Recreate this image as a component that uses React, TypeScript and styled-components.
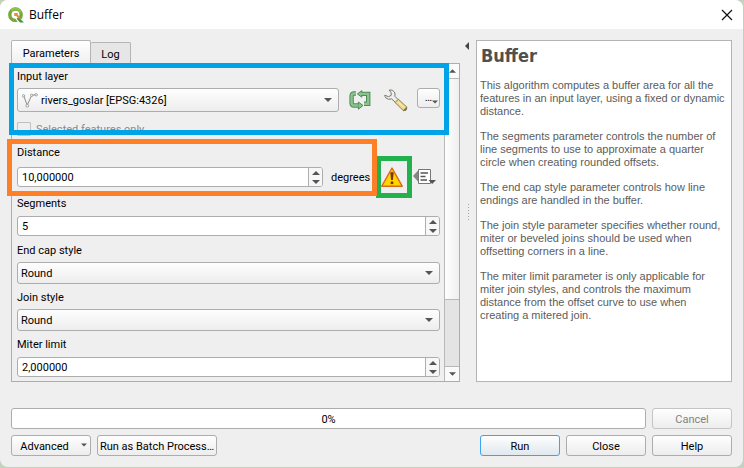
import React from "react";
import styled, { createGlobalStyle, css } from "styled-components";

const GlobalStyle = createGlobalStyle`
  * { box-sizing: border-box; }
  body {
    margin: 0;
    background: #c3d2bd;
    color: #000;
    font: 11px/14px Roboto, sans-serif;
  }
  button, input, select { font: inherit; color: inherit; margin: 0; }
`;

const buttonFace = css`
  border: 1px solid #adadad;
  border-radius: 3px;
  background: linear-gradient(#fefefe, #ededed);
`;

const Dialog = styled.main`
  display: flex;
  flex-direction: column;
  min-height: calc(100vh - 1px);
  margin: 0 1px 1px 0;
  border-radius: 8px;
  background: #efefef;
  overflow: hidden;
`;

const TitleBar = styled.header`
  display: flex;
  align-items: center;
  gap: 5px;
  height: 29px;
  padding: 0 8px;
  background: #fff;
`;

const Title = styled.h1`
  flex: 1;
  margin: 0;
  font: 12px/16px "Open Sans", sans-serif;
`;

const CloseIcon = styled.button`
  display: flex;
  padding: 2px;
  border: 0;
  background: none;
`;

const Content = styled.div`
  display: flex;
  flex: 1;
  flex-direction: column;
  padding: 11px;
`;

const Columns = styled.div`
  display: grid;
  flex: 1;
  grid-template-columns: minmax(0, 449fr) 16px minmax(0, 256fr);
`;

const LeftColumn = styled.section`
  display: flex;
  flex-direction: column;
`;

const Tabs = styled.div`
  display: flex;
  align-items: flex-end;
  height: 23px;
`;

const Tab = styled.button<{ $active?: boolean }>`
  width: ${(p) => (p.$active ? 80 : 40)}px;
  height: ${(p) => (p.$active ? 23 : 21)}px;
  padding: 3px 0 0;
  border: 1px solid #b4b4b4;
  border-width: ${(p) => (p.$active ? "1px" : "1px 1px 0 0")};
  border-bottom: 0;
  border-radius: 2px 2px 0 0;
  background: ${(p) => (p.$active ? "linear-gradient(#fff, #f0f0f0)" : "#e6e6e6")};
`;

const Pane = styled.div`
  display: flex;
  flex: 1;
  border: 1px solid #adadad;
`;

const Form = styled.form`
  display: flex;
  flex: 1;
  min-width: 0;
  flex-direction: column;
  gap: 5px;
  padding: 4px 4px 4px 5px;
`;

const Field = styled.div<{ $gap?: number; $after?: number }>`
  position: relative;
  display: flex;
  flex-direction: column;
  gap: ${(p) => p.$gap ?? 4}px;
  margin-bottom: ${(p) => p.$after ?? 0}px;
`;

const FieldLabel = styled.label`
  padding-top: 2px;
`;

const Row = styled.div`
  display: flex;
  align-items: center;
`;

const SelectBox = styled.div`
  position: relative;
  display: flex;
  flex: 1;
  min-width: 0;
  align-items: center;
`;

const Select = styled.select<{ $tall?: boolean }>`
  ${buttonFace}
  width: 100%;
  height: ${(p) => (p.$tall ? 24 : 22)}px;
  padding: 2px 20px 0 ${(p) => (p.$tall ? 23 : 3)}px;
  appearance: none;
`;

const SelectArrow = styled.span`
  position: absolute;
  right: 7px;
  display: flex;
  pointer-events: none;
`;

const LayerGlyph = styled.span`
  position: absolute;
  left: 5px;
  display: flex;
  pointer-events: none;
`;

const ToolButton = styled.button`
  display: flex;
  padding: 0;
  border: 0;
  background: none;
`;

const LayerTools = styled.div`
  display: flex;
  align-items: center;
  gap: 13px;
  margin: 0 9px 0 10px;
`;

const MoreButton = styled.button`
  ${buttonFace}
  display: flex;
  align-items: flex-end;
  align-self: flex-start;
  justify-content: flex-end;
  width: 23px;
  height: 20px;
  padding: 0 1px 3px;
  line-height: 12px;
`;

const CheckRow = styled.label`
  display: flex;
  align-items: center;
  gap: 5px;
  margin-top: 6px;
  color: #8a8a8a;
`;

const CheckText = styled.span`
  padding-top: 2px;
  line-height: 12px;
`;

const CheckBox = styled.input`
  width: 14px;
  height: 14px;
  margin: 0;
  border: 1px solid #c0c0c0;
  border-radius: 1px;
  background: #efefef;
  appearance: none;
`;

const SpinFrame = styled.div`
  display: flex;
  flex: 1;
  min-width: 0;
  height: 20px;
  border: 1px solid #adadad;
  border-radius: 3px;
  background: #fff;
  overflow: hidden;
`;

const SpinInput = styled.input`
  flex: 1;
  min-width: 0;
  padding: 2px 4px 0;
  border: 0;
  background: none;
`;

const SpinSteps = styled.div`
  display: flex;
  flex-direction: column;
  width: 14px;
  border-left: 1px solid #adadad;
  background: #f7f7f7;
`;

const Step = styled.button`
  display: flex;
  flex: 1;
  align-items: center;
  justify-content: center;
  padding: 0;
  border: 0;
  background: none;
`;

const DistanceTools = styled.div`
  display: flex;
  align-items: center;
  width: 117px;
  padding-left: 8px;
`;

const Unit = styled.span`
  width: 50px;
  padding-top: 2px;
`;

const Warning = styled.span`
  position: relative;
  display: flex;
  margin-right: 10px;
`;

const Highlight = styled.span<{ $color: string; $inset: string }>`
  position: absolute;
  z-index: 1;
  inset: ${(p) => p.$inset};
  border: 5px solid ${(p) => p.$color};
  pointer-events: none;
`;

const ScrollBar = styled.div`
  display: flex;
  flex-direction: column;
  width: 15px;
  border-left: 1px solid #b8b8b8;
  background: #e4e4e4;
`;

const ScrollButton = styled.button`
  display: flex;
  align-items: center;
  justify-content: center;
  height: 14px;
  padding: 0;
  border: 0;
  background: #fafafa;
`;

const ScrollThumb = styled.div`
  flex: 220;
  border: solid #b8b8b8;
  border-width: 1px 0;
  background: linear-gradient(90deg, #fefefe, #efefef);
`;

const ScrollRest = styled.div`
  flex: 66;
  border-bottom: 1px solid #b8b8b8;
`;

const Splitter = styled.div`
  display: flex;
  flex-direction: column;
  align-items: center;
  justify-content: space-between;
  padding: 2px 7px 161px 3px;
`;

const Grip = styled.div`
  align-self: flex-end;
  width: 1px;
  height: 17px;
  background: repeating-linear-gradient(#a0a0a0 0 1px, transparent 1px 3px);
`;

const Help = styled.article`
  padding: 5px 3px;
  border: 1px solid #b4b4b4;
  background: #fff;
  color: #5c5c5c;
  font-family: "Liberation Sans", sans-serif;
  line-height: 13px;
`;

const HelpTitle = styled.h2`
  margin: 0 0 13px;
  padding-left: 1px;
  color: #505050;
  font: bold 18px/20px "DejaVu Sans Condensed", sans-serif;
`;

const HelpText = styled.p`
  margin: 0 0 12px;
`;

const Footer = styled.footer`
  display: flex;
  flex-direction: column;
  gap: 6px;
  margin-top: 26px;
`;

const FooterRow = styled.div`
  display: flex;
  gap: 6px;
`;

const Progress = styled.div`
  flex: 1;
  height: 21px;
  padding-top: 1px;
  border: 1px solid #adadad;
  border-radius: 3px;
  background: #fff;
  line-height: 20px;
  text-align: center;
`;

const PushButton = styled.button<{ $primary?: boolean; $width?: number }>`
  ${buttonFace}
  display: flex;
  align-items: center;
  justify-content: center;
  width: ${(p) => p.$width ?? 80}px;
  height: 21px;
  padding: 2px 0 0;
  white-space: nowrap;
  ${(p) => p.$primary && "border-color: #3ea2ee; background: linear-gradient(#fdfefe, #e1e8ee);"}
  &:disabled { border-color: #c4c4c4; color: #828282; }
`;

const MenuArrow = styled.span`
  display: flex;
  margin-left: 12px;
  margin-right: -5px;
  padding-bottom: 4px;
`;

const Spacer = styled.div`
  flex: 1;
`;

function Arrow({ up, width = 8 }: { up?: boolean; width?: number }) {
  return (
    <svg width={width} height={4} viewBox="0 0 8 4" aria-hidden="true">
      <path d={up ? "M0 4L4 0L8 4Z" : "M0 0H8L4 4Z"} fill="#555" />
    </svg>
  );
}

function Logo() {
  return (
    <svg width={16} height={16} viewBox="0 0 16 16" aria-hidden="true">
      <circle cx="7.5" cy="7.7" r="5.7" fill="none" stroke="#74a83a" strokeWidth="3.4" />
      <path d="M3 3.5A6 6 0 0 1 12.8 5.5" fill="none" stroke="#96bd50" strokeWidth="2.2" />
      <path d="M9.2 9.2L16 14.6V16H10.5L7.5 11.8V9.2Z" fill="#fff" />
      <path d="M10.6 10.2L16 15.6H12L8.6 11.8Z" fill="#4d9440" />
      <path d="M6.2 6H9.8V7.6L11.8 10L10.3 11.4L8.2 9.1H6.2Z" fill="#ee8d32" />
    </svg>
  );
}

function LineLayerIcon() {
  return (
    <svg width={16} height={15} viewBox="0 0 16 15" fill="none" stroke="#8c8c8c" aria-hidden="true">
      <path d="M1.8 3.2L5.2 12.2L9.6 2.5L13.8 1.6" />
      <g fill="#f8f8f8" strokeWidth=".8">
        <circle cx="1.5" cy="2.8" r="1.2" />
        <circle cx="5.3" cy="12.7" r="1.4" />
        <circle cx="9.7" cy="2.3" r="1.2" />
        <circle cx="14.2" cy="1.8" r="1.2" />
      </g>
    </svg>
  );
}

function IterateIcon() {
  const d = "M7 3.5H5Q2.6 3.5 2.6 6V13Q2.6 15.5 5 15.5H9.5M12 3.9H19.2V13.8H15";
  return (
    <svg width={22} height={20} viewBox="0 0 22 20" fill="none" aria-hidden="true">
      <path d={d} stroke="#4e8c5a" strokeWidth="4.4" />
      <path d="M12.8 .6V7.2L8.4 3.9ZM9.4 12V19.2L14 15.5Z" fill="#8cc28c" stroke="#4e8c5a" />
      <path d={d} stroke="#8cc28c" strokeWidth="2.4" />
    </svg>
  );
}

function WrenchIcon() {
  return (
    <svg width={24} height={23} viewBox="0 0 24 23" strokeLinejoin="round" aria-hidden="true">
      <path
        d="M5.2 1Q8.6 .3 10.4 3Q11.6 5 10.8 7.2L14.4 10.8L11.6 13.6L7.7 9.9Q4.2 11.2 1.7 8.8Q.7 7.5 .8 6.2L4.4 7.7L7.2 6.4L7.2 3.8Z"
        fill="#eeeeea"
        stroke="#777970"
      />
      <path d="M14.3 10.2L23 18.3Q23.2 21.6 19.6 21.8L11 13.5Z" fill="#ecd98a" stroke="#8b8160" />
      <path d="M14 12.8L20.5 19" stroke="#fff1b4" />
      <path d="M18.8 21.4L22.8 17.7L23 20.1L21.3 22Z" fill="#82744c" />
    </svg>
  );
}

function WarningIcon() {
  return (
    <svg width={22} height={20} viewBox="0 0 22 20" role="img" aria-label="Warning">
      <path d="M11 1L21.2 19.2H.8Z" fill="#ffd400" stroke="#d96a18" strokeWidth="1.4" strokeLinejoin="round" />
      <path d="M9.3 5.6Q11 4.4 12.7 5.6L11.9 13H10.1Z" fill="#7d3507" />
      <circle cx="11" cy="15.8" r="1.5" fill="#7d3507" />
    </svg>
  );
}

function OverrideIcon() {
  return (
    <svg width={24} height={18} viewBox="0 0 24 18" aria-hidden="true">
      <path d="M0 8L5.5 2V14Z" fill="#858585" />
      <path d="M5.5 1.5H17.5V15.5H5.5Z" fill="#fff" stroke="#777" />
      <path d="M7.5 5H15M7.5 8.5H12.5M7.5 12H14" stroke="#555" strokeWidth="1.3" />
      <path d="M15.5 12H23L19.2 16Z" fill="#555" />
    </svg>
  );
}

function ComboBox({ id, children, icon }: { id: string; children: string; icon?: React.ReactNode }) {
  return (
    <SelectBox>
      <Select id={id} $tall={Boolean(icon)}>
        <option>{children}</option>
      </Select>
      {icon && <LayerGlyph>{icon}</LayerGlyph>}
      <SelectArrow><Arrow /></SelectArrow>
    </SelectBox>
  );
}

function SpinBox({ id, value }: { id: string; value: string }) {
  return (
    <SpinFrame>
      <SpinInput id={id} defaultValue={value} />
      <SpinSteps>
        <Step type="button" aria-label="Increase"><Arrow up /></Step>
        <Step type="button" aria-label="Decrease"><Arrow /></Step>
      </SpinSteps>
    </SpinFrame>
  );
}

const helpParagraphs = [
  "This algorithm computes a buffer area for all the features in an input layer, using a fixed or dynamic distance.",
  "The segments parameter controls the number of line segments to use to approximate a quarter circle when creating rounded offsets.",
  "The end cap style parameter controls how line endings are handled in the buffer.",
  "The join style parameter specifies whether round, miter or beveled joins should be used when offsetting corners in a line.",
  "The miter limit parameter is only applicable for miter join styles, and controls the maximum distance from the offset curve to use when creating a mitered join.",
];

export default function App() {
  return (
    <>
      <GlobalStyle />
      <Dialog>
        <TitleBar>
          <Logo />
          <Title>Buffer</Title>
          <CloseIcon type="button" aria-label="Close window">
            <svg width={12} height={12} viewBox="0 0 12 12" aria-hidden="true">
              <path d="M1 1L11 11M11 1L1 11" stroke="#111" strokeWidth="1.2" />
            </svg>
          </CloseIcon>
        </TitleBar>
        <Content>
          <Columns>
            <LeftColumn>
              <Tabs role="tablist">
                <Tab role="tab" aria-selected="true" $active>Parameters</Tab>
                <Tab role="tab" aria-selected="false">Log</Tab>
              </Tabs>
              <Pane role="tabpanel">
                <Form>
                  <Field $after={3}>
                    <FieldLabel htmlFor="layer">Input layer</FieldLabel>
                    <Row>
                      <ComboBox id="layer" icon={<LineLayerIcon />}>rivers_goslar [EPSG:4326]</ComboBox>
                      <LayerTools>
                        <ToolButton type="button" aria-label="Iterate over layer"><IterateIcon /></ToolButton>
                        <ToolButton type="button" aria-label="Advanced options"><WrenchIcon /></ToolButton>
                      </LayerTools>
                      <MoreButton type="button">…<Arrow width={6} /></MoreButton>
                    </Row>
                    <CheckRow>
                      <CheckBox type="checkbox" disabled />
                      <CheckText>Selected features only</CheckText>
                    </CheckRow>
                    <Highlight $color="#00a2e8" $inset="-5px -9px 1px -8px" />
                  </Field>
                  <Field $gap={7} $after={3}>
                    <FieldLabel htmlFor="distance">Distance</FieldLabel>
                    <Row>
                      <SpinBox id="distance" value="10,000000" />
                      <DistanceTools>
                        <Unit>degrees</Unit>
                        <Warning>
                          <WarningIcon />
                          <Highlight $color="#22b14c" $inset="-11px -9px -11px -5px" />
                        </Warning>
                        <ToolButton type="button" aria-label="Data defined override"><OverrideIcon /></ToolButton>
                      </DistanceTools>
                    </Row>
                    <Highlight $color="#ff7f27" $inset="-5px 63px -9px -10px" />
                  </Field>
                  <Field $gap={5} $after={1}>
                    <FieldLabel htmlFor="segments">Segments</FieldLabel>
                    <Row><SpinBox id="segments" value="5" /></Row>
                  </Field>
                  <Field>
                    <FieldLabel htmlFor="cap">End cap style</FieldLabel>
                    <ComboBox id="cap">Round</ComboBox>
                  </Field>
                  <Field>
                    <FieldLabel htmlFor="join">Join style</FieldLabel>
                    <ComboBox id="join">Round</ComboBox>
                  </Field>
                  <Field $gap={5}>
                    <FieldLabel htmlFor="miter">Miter limit</FieldLabel>
                    <Row><SpinBox id="miter" value="2,000000" /></Row>
                  </Field>
                </Form>
                <ScrollBar>
                  <ScrollButton type="button" aria-label="Scroll up"><Arrow up width={7} /></ScrollButton>
                  <ScrollThumb />
                  <ScrollRest />
                  <ScrollButton type="button" aria-label="Scroll down"><Arrow width={7} /></ScrollButton>
                </ScrollBar>
              </Pane>
            </LeftColumn>
            <Splitter>
              <ToolButton type="button" aria-label="Collapse help">
                <svg width={5} height={8} viewBox="0 0 5 8" aria-hidden="true">
                  <path d="M5 0V8L1 4Z" fill="#444" />
                </svg>
              </ToolButton>
              <Grip />
            </Splitter>
            <Help>
              <HelpTitle>Buffer</HelpTitle>
              {helpParagraphs.map((text) => <HelpText key={text}>{text}</HelpText>)}
            </Help>
          </Columns>
          <Footer>
            <FooterRow>
              <Progress role="progressbar" aria-valuenow={0}>0%</Progress>
              <PushButton type="button" disabled>Cancel</PushButton>
            </FooterRow>
            <FooterRow>
              <PushButton type="button">
                Advanced<MenuArrow><Arrow width={6} /></MenuArrow>
              </PushButton>
              <PushButton type="button" $width={120}>Run as Batch Process…</PushButton>
              <Spacer />
              <PushButton type="button" $primary>Run</PushButton>
              <PushButton type="button">Close</PushButton>
              <PushButton type="button">Help</PushButton>
            </FooterRow>
          </Footer>
        </Content>
      </Dialog>
    </>
  );
}
